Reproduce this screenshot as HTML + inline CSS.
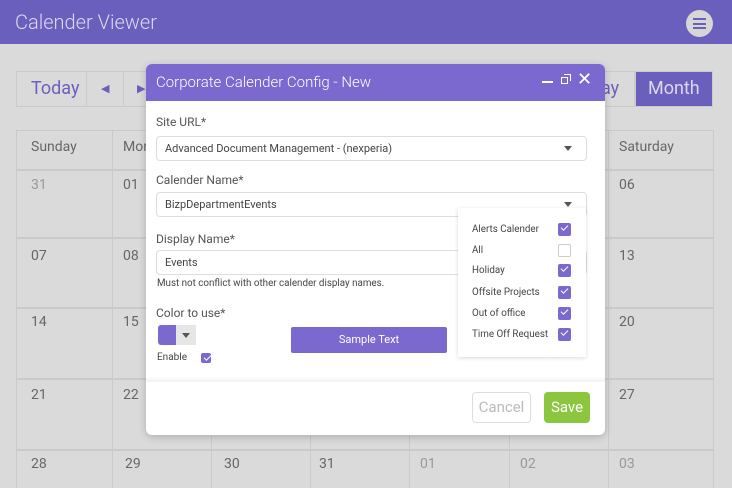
<!DOCTYPE html>
<html><head><meta charset="utf-8"><style>
*{box-sizing:border-box;margin:0;padding:0}
body{width:732px;height:488px;overflow:hidden;background:#dadada;font-family:Roboto,"Liberation Sans",sans-serif;position:relative;color:#666}
.top{position:absolute;left:0;top:0;width:732px;height:44px;background:#6b5fbd}
.top .t{position:absolute;left:15px;top:10px;font-size:20px;color:#dcd8ee;font-weight:300}
.menu{position:absolute;left:686px;top:10px;width:27px;height:27px;border-radius:50%;background:#d6d6d6}
.menu i{position:absolute;left:7px;width:13px;height:2px;background:#6b5fbd}
.tb{position:absolute;top:71px;height:36px;border:1px solid #cacaca;font-size:18px;color:#6b5fbd;line-height:34px}
.a{position:absolute;font-size:14px;color:#666}
.v{position:absolute;background:#cacaca;width:1px;top:130px;height:358px}
.h{position:absolute;background:#cacaca;height:2px;left:16px;width:697px}
.dlg{position:absolute;left:146px;top:64px;width:459px;height:371px;background:#fff;border-radius:6px;box-shadow:0 2px 8px rgba(0,0,0,.2);overflow:hidden}
.hd{height:37px;background:#7b69cf;color:#fff;font-size:15px;padding:9px 10px;font-weight:300}
.lbl{position:absolute;left:10px;font-size:12px;color:#555}
.inp{position:absolute;left:10px;width:431px;height:25px;border:1px solid #ddd;border-radius:4px;font-size:11px;color:#444;padding:5px 8px}
.car{position:absolute;right:14px;top:9px;border-left:4px solid transparent;border-right:4px solid transparent;border-top:5px solid #555}
.pop{position:absolute;left:312px;top:144px;width:128px;height:149px;background:#fff;box-shadow:0 1px 4px rgba(0,0,0,.15)}
.pop div{position:absolute;left:14px;font-size:9.8px;color:#444}
.cb{position:absolute;left:100px;width:13px;height:13px;background:#7b69cf;border-radius:2px}
.cb::after{content:"";position:absolute;left:3px;top:2px;width:6px;height:3px;border-left:1px solid #fff;border-bottom:1px solid #fff;transform:rotate(-45deg)}
.cb.e{background:#fff;border:1px solid #ccc}.cb.e::after{display:none}
</style></head><body>
<div class="top"><div class="t">Calender Viewer</div><div class="menu"><i style="top:8px"></i><i style="top:12.5px"></i><i style="top:17px"></i></div></div>
<div class="tb" style="left:16px;width:71px;padding-left:14px">Today</div>
<div class="tb" style="left:86px;width:38px;padding-left:14px;font-size:11px">◀</div>
<div class="tb" style="left:123px;width:30px;padding-left:13px;font-size:11px">▶</div>
<div class="tb" style="left:560px;width:75px;padding-left:40px">ay</div>
<div class="tb" style="left:635px;width:78px;background:#6b5fbd;color:#dcd8ee;padding-left:12px">Month</div>
<div class="v" style="left:16px"></div><div class="v" style="left:112px"></div><div class="v" style="left:211px"></div><div class="v" style="left:310px"></div><div class="v" style="left:409px"></div><div class="v" style="left:509px"></div><div class="v" style="left:608px"></div><div class="v" style="left:713px"></div>
<div class="h" style="top:130px;height:1px"></div><div class="h" style="top:169px"></div><div class="h" style="top:237px"></div><div class="h" style="top:307px"></div><div class="h" style="top:378px"></div><div class="h" style="top:449px"></div>
<div class="a" style="left:31px;top:139px">Sunday</div><div class="a" style="left:123px;top:139px">Mon</div><div class="a" style="left:619px;top:139px">Saturday</div>
<div class="a" style="left:31px;top:177px;color:#999">31</div><div class="a" style="left:123px;top:177px">01</div><div class="a" style="left:619px;top:177px">06</div>
<div class="a" style="left:31px;top:248px">07</div><div class="a" style="left:123px;top:248px">08</div><div class="a" style="left:619px;top:248px">13</div>
<div class="a" style="left:31px;top:314px">14</div><div class="a" style="left:123px;top:314px">15</div><div class="a" style="left:619px;top:314px">20</div>
<div class="a" style="left:31px;top:387px">21</div><div class="a" style="left:123px;top:387px">22</div><div class="a" style="left:619px;top:387px">27</div>
<div class="a" style="left:31px;top:456px">28</div><div class="a" style="left:125px;top:456px">29</div><div class="a" style="left:224px;top:456px">30</div><div class="a" style="left:319px;top:456px">31</div><div class="a" style="left:420px;top:456px;color:#999">01</div><div class="a" style="left:520px;top:456px;color:#999">02</div><div class="a" style="left:619px;top:456px;color:#999">03</div>
<div class="dlg">
<div class="hd">Corporate Calender Config - New
<span style="position:absolute;left:396px;top:17px;width:11px;height:2px;background:#fff"></span>
<span style="position:absolute;left:415px;top:13px;width:7px;height:7px;border:1.3px solid #fff"></span><span style="position:absolute;left:418px;top:10px;width:7px;height:7px;border-top:1.3px solid #fff;border-right:1.3px solid #fff"></span>
<span style="position:absolute;left:431px;top:5px;font-size:18px">✕</span></div>
<div class="lbl" style="top:51px">Site URL*</div>
<div class="inp" style="top:72px">Advanced Document Management - (nexperia)<span class="car"></span></div>
<div class="lbl" style="top:109px">Calender Name*</div>
<div class="inp" style="top:128px">BizpDepartmentEvents<span class="car"></span></div>
<div class="lbl" style="top:168px">Display Name*</div>
<div class="inp" style="top:186px">Events</div>
<div style="position:absolute;left:11px;top:214px;font-size:9.8px;color:#444">Must not conflict with other calender display names.</div>
<div class="lbl" style="top:242px">Color to use*</div>
<div style="position:absolute;left:12px;top:261px;width:18px;height:20px;background:#7b69cf;border-radius:3px 0 0 3px"></div>
<div style="position:absolute;left:30px;top:261px;width:20px;height:20px;background:#e6e6e6"><span style="position:absolute;left:6px;top:8px;border-left:4px solid transparent;border-right:4px solid transparent;border-top:5px solid #555"></span></div>
<div style="position:absolute;left:11px;top:288px;font-size:10px;color:#444">Enable</div>
<div class="cb" style="left:55px;top:289px;width:10px;height:10px"></div>
<div style="position:absolute;left:145px;top:263px;width:156px;height:26px;background:#7b69cf;border-radius:2px;color:#fff;font-size:11px;text-align:center;line-height:26px">Sample Text</div>
<div class="pop">
<div style="top:16px">Alerts Calender</div><span class="cb" style="top:15px"></span>
<div style="top:37px">All</div><span class="cb e" style="top:36px"></span>
<div style="top:57px">Holiday</div><span class="cb" style="top:56px"></span>
<div style="top:79px">Offsite Projects</div><span class="cb" style="top:78px"></span>
<div style="top:100px">Out of office</div><span class="cb" style="top:99px"></span>
<div style="top:121px">Time Off Request</div><span class="cb" style="top:120px"></span>
</div>
<div style="position:absolute;left:0;top:312px;width:459px;height:6px;background:linear-gradient(#fff,#f2f2f2)"></div>
<div style="position:absolute;left:326px;top:328px;width:59px;height:31px;border:1px solid #ddd;border-radius:4px;color:#bbb;font-size:15px;text-align:center;line-height:29px">Cancel</div>
<div style="position:absolute;left:398px;top:328px;width:46px;height:31px;background:#8cc63f;border-radius:4px;color:#fff;font-size:15px;text-align:center;line-height:31px">Save</div>
</div>
</body></html>
